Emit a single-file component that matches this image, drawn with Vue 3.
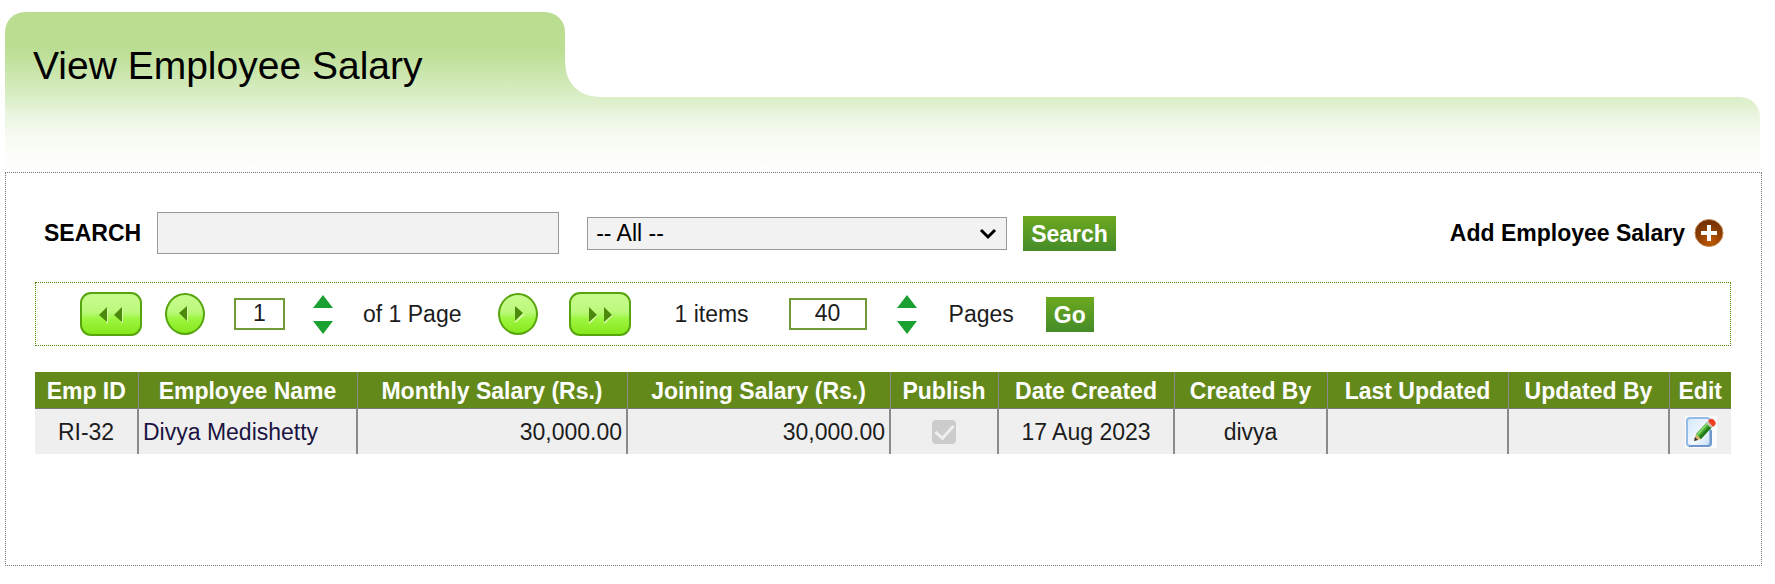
<template>
  <div class="page">
    <header class="heading">
      <div class="tab">
        <h1>View Employee Salary</h1>
      </div>
      <div class="strip"></div>
    </header>

    <main class="panel">
      <div class="toolbar">
        <form class="search" @submit.prevent="search">
          <label for="keyword">SEARCH</label>
          <input id="keyword" v-model="keyword" class="keyword" type="text" />
          <div class="filter">
            <select v-model="filter" aria-label="Filter">
              <option value="all">-- All --</option>
            </select>
            <svg class="chevron" width="18" height="12" viewBox="0 0 18 12">
              <path d="M2 2l7 7 7-7" fill="none" stroke="#000" stroke-width="3" />
            </svg>
          </div>
          <button class="action" type="submit">Search</button>
        </form>

        <a class="add" href="#add">
          Add Employee Salary
          <svg width="30" height="28" viewBox="0 0 30 28">
            <defs>
              <radialGradient id="plus" cx="0.55" cy="0.8" r="0.8">
                <stop offset="0" stop-color="#c05c00" />
                <stop offset="0.5" stop-color="#934000" />
                <stop offset="1" stop-color="#6b2c04" />
              </radialGradient>
            </defs>
            <ellipse cx="15" cy="14" rx="14" ry="13.5" fill="url(#plus)" stroke="#c98a55" />
            <path d="M7 14h16M15 6v16" stroke="#fff" stroke-width="4" />
          </svg>
        </a>
      </div>

      <div class="pager">
        <div class="group back">
          <button class="wide" aria-label="First page" @click="page = 1">
            <svg width="26" height="18" viewBox="0 0 26 18">
              <path d="M9 3v14M24 3v14" stroke="#d9ffa8" stroke-width="2" />
              <path d="M9 1v15L1 9zM24 1v15L16 9z" fill="#4b8a0c" />
            </svg>
          </button>
          <button class="round" aria-label="Previous page" @click="step(-1)">
            <svg width="12" height="18" viewBox="0 0 12 18">
              <path d="M9 1v16L2 10z" fill="#d9ffa8" />
              <path d="M8 1v15L0 8z" fill="#4b8a0c" />
            </svg>
          </button>
        </div>

        <div class="group">
          <input v-model="page" class="number" type="text" aria-label="Page number" />
          <svg class="steps" viewBox="0 0 24 40">
            <path d="M1 14L11 1l10 13zM1 27h20L11 40z" fill="#1ba131" />
          </svg>
          <span>of 1 Page</span>
        </div>

        <div class="group next">
          <button class="round" aria-label="Next page" @click="step(1)">
            <svg width="12" height="18" viewBox="0 0 12 18">
              <path d="M3 17L12 9" stroke="#d9ffa8" stroke-width="2" />
              <path d="M3 1v15L11 8z" fill="#4b8a0c" />
            </svg>
          </button>
          <button class="wide" aria-label="Last page" @click="page = 1">
            <svg width="26" height="18" viewBox="0 0 26 18">
              <path d="M2 17L10 9M17 17L25 9" stroke="#d9ffa8" stroke-width="2" />
              <path d="M2 1v15L10 9zM17 1v15L25 9z" fill="#4b8a0c" />
            </svg>
          </button>
        </div>

        <span class="items">{{ rows.length }} items</span>

        <div class="group size">
          <input id="size" v-model="pageSize" class="number large" type="text" />
          <svg class="steps" viewBox="0 0 24 40">
            <path d="M1 14L11 1l10 13zM1 27h20L11 40z" fill="#1ba131" />
          </svg>
          <label for="size">Pages</label>
          <button class="action go">Go</button>
        </div>
      </div>

      <table>
        <colgroup>
          <col v-for="col in columns" :key="col.title" :style="{ width: col.width + 'px' }" />
        </colgroup>
        <thead>
          <tr>
            <th v-for="col in columns" :key="col.title">{{ col.title }}</th>
          </tr>
        </thead>
        <tbody>
          <tr v-for="row in rows" :key="row.id">
            <td>{{ row.id }}</td>
            <td class="left"><a class="name" href="#employee">{{ row.name }}</a></td>
            <td class="right">{{ row.monthly }}</td>
            <td class="right">{{ row.joining }}</td>
            <td>
              <input class="tick" type="checkbox" :checked="row.published" disabled aria-label="Published" />
            </td>
            <td>{{ row.created }}</td>
            <td>{{ row.createdBy }}</td>
            <td>{{ row.updated }}</td>
            <td>{{ row.updatedBy }}</td>
            <td>
              <a class="edit" href="#edit" aria-label="Edit">
                <svg width="32" height="32" viewBox="0 0 32 32">
                  <defs>
                    <linearGradient id="sheet" x1="0" y1="0" x2="1" y2="1">
                      <stop offset="0" stop-color="#d3e7fb" />
                      <stop offset="0.6" stop-color="#f2f8ff" />
                      <stop offset="1" stop-color="#c4dcf5" />
                    </linearGradient>
                  </defs>
                  <path d="M0 0h32v32H0z" fill="#fafbfd" />
                  <rect x="2" y="2" width="23" height="28" rx="3" fill="url(#sheet)" stroke="#94bbe6" stroke-width="2" />
                  <path d="M4 30h19q3 0 3-3V14" fill="none" stroke="#6f97cc" stroke-width="2" />
                  <path d="M9 25l2-7 5 5z" fill="#d8b36a" />
                  <path d="M9 25l1-4 3 3z" fill="#333" />
                  <path d="M11 18L22 6l5 5-11 12z" fill="#43ad2f" />
                  <path d="M14 21L25 9l2 2-11 12z" fill="#237a1c" />
                  <path d="M12 18L22 7l1 1-10 11z" fill="#98de7c" />
                  <path d="M21 7l2-2 5 5-2 2z" fill="#c9c6b8" />
                  <path d="M23 5q3-4 6-1t1 5l-2 2z" fill="#ee4023" />
                </svg>
              </a>
            </td>
          </tr>
        </tbody>
      </table>
    </main>
  </div>
</template>

<script setup>
import { ref } from 'vue'

const keyword = ref('')
const filter = ref('all')
const page = ref(1)
const pageSize = ref(40)

// widths are shares of the full table width
const columns = [
  { title: 'Emp ID', width: 103 },
  { title: 'Employee Name', width: 219 },
  { title: 'Monthly Salary (Rs.)', width: 270 },
  { title: 'Joining Salary (Rs.)', width: 263 },
  { title: 'Publish', width: 108 },
  { title: 'Date Created', width: 176 },
  { title: 'Created By', width: 153 },
  { title: 'Last Updated', width: 181 },
  { title: 'Updated By', width: 161 },
  { title: 'Edit', width: 62 }
]

const rows = ref([
  {
    id: 'RI-32',
    name: 'Divya Medishetty',
    monthly: '30,000.00',
    joining: '30,000.00',
    published: true,
    created: '17 Aug 2023',
    createdBy: 'divya',
    updated: '',
    updatedBy: ''
  }
])

const search = () => {
  page.value = 1
}

// only one page of results for now
const step = (n) => {
  page.value = Math.min(1, Math.max(1, Number(page.value) + n))
}
</script>

<style>
body {
  background: #fff;
}
</style>

<style scoped>
.page {
  padding: 12px 13px 18px 5px;
  font-family: "Liberation Sans", Arial, sans-serif;
  font-size: 23px;
  line-height: 28px;
  color: #1c1c1c;
}

* {
  box-sizing: border-box;
}

input,
select,
button {
  margin: 0;
  font: inherit;
  color: inherit;
  border-radius: 0;
}

svg {
  display: block;
  flex: none;
}

/* heading: both parts show slices of the same gradient */
.heading {
  --fade: linear-gradient(#badd90, #bcde94 38px, #cbe6ad 62px, #dcefca 88px, #ebf5e0 104px, #f6faf1 122px, #fcfdfa 142px, #fff 160px);
}

.tab {
  position: relative;
  display: flex;
  align-items: center;
  width: 560px;
  height: 85px;
  padding: 22px 28px 0;
  background: var(--fade) 0 0 / 100% 160px;
  border-radius: 20px 20px 0 0;
}

.tab::after {
  content: "";
  position: absolute;
  left: 100%;
  bottom: 0;
  width: 32px;
  height: 32px;
  background: var(--fade) 0 -53px / 100% 160px;
  mask: radial-gradient(circle at 100% 0, transparent 31px, #000 32px);
}

.strip {
  height: 75px;
  margin-right: 2px;
  background: var(--fade) 0 -85px / 100% 160px;
  border-radius: 0 20px 0 0;
}

h1 {
  margin: 0;
  font-size: 39px;
  font-weight: 400;
  line-height: 44px;
  color: #000;
}

.panel {
  padding: 39px 30px 111px 29px;
  border: 1px dotted #777;
}

.toolbar {
  display: flex;
  align-items: center;
  justify-content: space-between;
  padding: 0 7px 0 9px;
  font-weight: 700;
  color: #000;
}

.search {
  display: flex;
  align-items: center;
  gap: 16px;
}

.keyword {
  width: 402px;
  height: 42px;
  padding: 0 8px;
  background: #f2f2f2;
  border: 1px solid #999;
}

.filter {
  position: relative;
  margin-left: 12px;
}

.filter select {
  display: block;
  width: 420px;
  height: 33px;
  padding: 0 8px;
  font-weight: 400;
  appearance: none;
  background: #f2f2f2;
  border: 1px solid #999;
}

.chevron {
  position: absolute;
  top: 11px;
  right: 10px;
  pointer-events: none;
}

.action {
  height: 35px;
  padding: 2px 8px 0;
  font-weight: 700;
  color: #fff;
  background: linear-gradient(#6ca81f, #458c29);
  border: 0;
}

.add {
  display: flex;
  align-items: center;
  gap: 9px;
  color: inherit;
  text-decoration: none;
}

.pager {
  display: flex;
  align-items: center;
  gap: 29px;
  height: 64px;
  margin: 28px 0 26px;
  padding-left: 44px;
  border: 1px dotted #4f8500;
}

.group {
  display: flex;
  align-items: center;
  gap: 27px;
}

.back {
  gap: 23px;
}

.next {
  gap: 31px;
  margin-left: 8px;
}

.items {
  margin-left: 14px;
}

.size {
  gap: 29px;
  margin-left: 11px;
}

.go {
  margin-left: 3px;
}

.wide,
.round {
  display: flex;
  align-items: center;
  justify-content: center;
  padding: 0;
  background: linear-gradient(#c9fb8e, #bbf97c 45%, #9df540 62%, #86e81c);
  border: 2px solid #57a50e;
}

.wide {
  width: 62px;
  height: 44px;
  padding-top: 2px;
  border-radius: 11px;
}

.round {
  width: 40px;
  height: 42px;
  border-radius: 50%;
}

.number {
  width: 51px;
  height: 32px;
  padding: 0 0 2px;
  text-align: center;
  background: #fff;
  border: 2px solid #709b38;
}

.large {
  width: 78px;
}

.steps {
  width: 24px;
  height: 40px;
}

table {
  width: 100%;
  table-layout: fixed;
  border-collapse: collapse;
}

th,
td {
  padding: 0 4px;
  text-align: center;
  white-space: nowrap;
  border-left: 2px solid #8a8a8a;
}

th:first-child,
td:first-child {
  border-left: 0;
}

th {
  height: 36px;
  padding: 2px 0 0;
  color: #fff;
  background: #64891b;
  border-left-width: 1px;
  border-bottom: 1px solid #777;
}

td {
  height: 46px;
  padding-top: 1px;
  background: #efefef;
}

.left {
  text-align: left;
}

.right {
  text-align: right;
}

.name {
  color: #1b1442;
  text-decoration: none;
}

.tick {
  display: grid;
  place-items: center;
  width: 24px;
  height: 24px;
  margin: 0 auto;
  appearance: none;
  background: #ccc;
  border-radius: 4px;
}

.tick:checked::before {
  content: "";
  width: 8px;
  height: 15px;
  margin-bottom: 4px;
  border: solid #efefef;
  border-width: 0 3px 3px 0;
  transform: rotate(42deg);
}

.edit {
  display: inline-block;
  vertical-align: middle;
}
</style>
